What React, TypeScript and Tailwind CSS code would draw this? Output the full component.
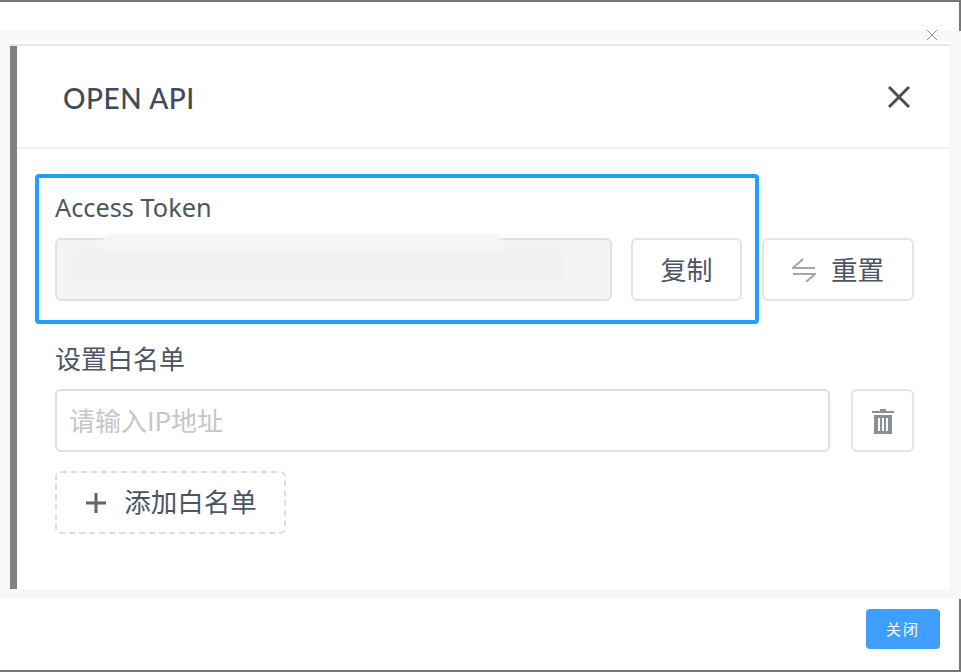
import React from "react";

const sans = "font-['Noto_Sans','Noto_Sans_CJK_SC',sans-serif]";

const App: React.FC = () => {
  return (
    <div className={`relative flex h-[672px] w-[961px] flex-col overflow-hidden bg-white ${sans}`}>
      {/* window frame */}
      <div className="pointer-events-none absolute inset-0 border-t-2 border-r-2 border-b-2 border-[#777]" />

      <div className="h-[31px] shrink-0" />

      {/* grey scroll area */}
      <div className="relative flex h-[568px] shrink-0 flex-col bg-[#f7f8fa] pt-[10px] pr-[11px] pb-[10px] pl-[10px]">
        <svg className="absolute top-[-2px] left-[926px] h-3 w-3 text-[#8a8f96]" viewBox="0 0 12 12" fill="none" stroke="currentColor" strokeWidth="1">
          <path d="M1 1l10 10M11 1L1 11" />
        </svg>

        {/* modal card */}
        <div className="relative flex flex-1 flex-col bg-white pt-[3px]">
          <div className="h-[2px] bg-[#e5e7eb]" />
          <div className="flex flex-1">
            <div className="w-[7px] shrink-0 bg-[#808080]" />
            <div className="flex min-w-0 flex-1 flex-col">
              <div className="flex h-[103px] items-center justify-between border-b-2 border-[#f1f2f4] pr-[39px] pl-[46px]">
                <h1 className="pt-[2px] font-['Lato',sans-serif] text-[28px] leading-none font-medium tracking-[0.6px] text-[#414a58]">OPEN API</h1>
                <svg className="h-[24px] w-[24px] text-[#4b4f55]" viewBox="0 0 24 24" fill="none" stroke="currentColor" strokeWidth="3">
                  <path d="M2 2l20 20M22 2L2 22" />
                </svg>
              </div>

              <div className="flex flex-col pt-[43px] pr-[36px] pl-[38px]">
                <label className="text-[25.3px] leading-[30px] text-[#4b5563]">Access Token</label>

                <div className="mt-[16px] flex">
                  <div className="relative h-[63px] w-[557px] rounded-[6px] border-2 border-[#e0e1e3] bg-[#f4f4f5]">
                    {/* redacted token */}
                    <div className="absolute top-[-7px] left-[45px] h-[52px] w-[400px] rounded-[10px] bg-[#f6f6f6] blur-[1px]" />
                    <div className="absolute top-[10px] left-[16px] h-[35px] w-[490px] rounded-[4px] bg-[#f0f0f0] blur-[2px]" />
                  </div>
                  <button className="ml-[19px] h-[63px] w-[111px] rounded-[6px] border-2 border-[#e3e4e6] bg-white pt-[2px] text-[26px] text-[#4b5563]">
                    复制
                  </button>
                  <button className="ml-[20px] flex h-[63px] w-[152px] items-center justify-center gap-[15px] rounded-[6px] border-2 border-[#e3e4e6] bg-white text-[26.5px] text-[#4b5563]">
                    <svg className="h-[24px] w-[24px] text-[#a2a7ae]" viewBox="0 0 24 24" fill="none" stroke="currentColor" strokeWidth="2">
                      <path d="M11 1L1 10H23M1 16H23L14 24" />
                    </svg>
                    <span className="pt-[2px]">重置</span>
                  </button>
                </div>

                <label className="mt-[43px] text-[26px] leading-[30px] text-[#4b5563]">设置白名单</label>

                <div className="mt-[15px] flex">
                  <input
                    placeholder="请输入IP地址"
                    className="h-[63px] w-[775px] rounded-[6px] border-2 border-[#dcdee1] bg-white px-[12px] pb-[2px] font-['Noto_Sans_CJK_SC',sans-serif] text-[26px] placeholder:text-[#c3c6cb]"
                  />
                  <button className="ml-[21px] flex h-[63px] w-[63px] items-center justify-center rounded-[6px] border-2 border-[#e3e4e6] bg-white">
                    <svg className="h-[26px] w-[24px] text-[#8a8f96]" viewBox="0 0 24 26" fill="currentColor">
                      <path d="M9 1h6v2h8v2H1V3h8zM3 7h18v19H3zM7 10v13h2V10zM11 10v13h2V10zM15 10v13h2V10z" fillRule="evenodd" />
                    </svg>
                  </button>
                </div>

                <button className="mt-[19px] flex h-[63px] w-[231px] items-center justify-center gap-[18px] rounded-[6px] border-2 border-dashed border-[#dcdee1] bg-white pl-[2px] text-[26.5px] text-[#4b5563]">
                  <svg className="h-[20px] w-[20px] text-[#5f6670]" viewBox="0 0 20 20" fill="none" stroke="currentColor" strokeWidth="3">
                    <path d="M10 0v20M0 10h20" />
                  </svg>
                  添加白名单
                </button>
              </div>
            </div>
          </div>

          {/* annotation box */}
          <div className="pointer-events-none absolute top-[133px] left-[25px] h-[150px] w-[724px] rounded-[4px] border-[4px] border-[#219ffc]" />
        </div>
      </div>

      {/* footer */}
      <div className="flex flex-1 items-start justify-end pt-[10px] pr-[21px]">
        <button className="h-[40px] w-[74px] rounded-[4px] bg-[#409eff] text-[15px] tracking-[2px] text-white">关闭</button>
      </div>
    </div>
  );
};

export default App;
